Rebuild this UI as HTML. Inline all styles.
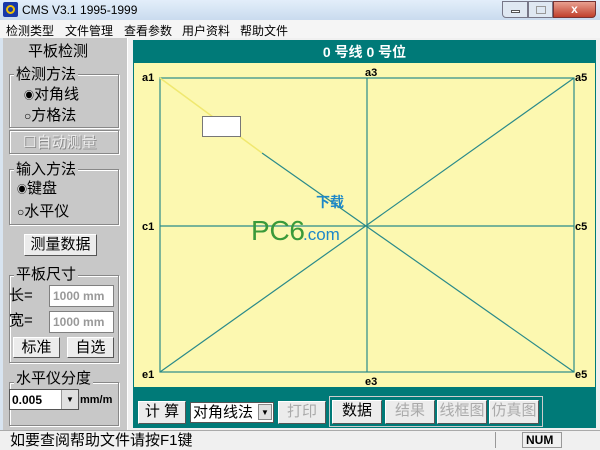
<!DOCTYPE html>
<html><head><meta charset="utf-8"><style>
*{margin:0;padding:0;box-sizing:border-box}
body{width:600px;height:450px;overflow:hidden;background:#d8e4f0;font-family:"Liberation Sans","Noto Sans CJK SC",sans-serif;position:relative;font-size:13px}
.a{position:absolute}
.title{left:0;top:0;width:600px;height:20px;background:linear-gradient(#e3eefa,#c9dbee);}
.menu{left:0;top:20px;width:600px;height:18px;background:#f5f5f5;font-size:12px}
.menu span{position:absolute;top:2px}
.left{left:3px;top:38px;width:125px;height:392px;background:#c8c8c8;border-right:1px solid #fff}
.grp{position:absolute;border:1px solid #888;box-shadow:1px 1px 0 #fff inset,1px 1px 0 #fff}
.lg{position:absolute;background:#c8c8c8;font-size:15px;padding:0 2px;line-height:15px}
.btn{position:absolute;background:#ececec;border:1px solid #fff;border-right-color:#555;border-bottom-color:#555;text-align:center;font-size:15px;line-height:20px}
.t14{position:absolute;font-size:15px;line-height:16px}
.inp{position:absolute;background:#fff;border:1px solid #808080;font-size:12px;color:#999;padding:3px 3px;font-weight:bold}
</style></head><body>
<div class="a title"></div>
<div class="a" style="left:3px;top:2px;width:15px;height:15px;background:#1838a8;border-radius:2px"><div style="margin:3px;width:9px;height:9px;border:2px solid #f0c000;border-radius:50%"></div></div>
<div class="a" style="left:22px;top:3px;font-size:12px">CMS V3.1 1995-1999</div>
<div class="a" style="left:502px;top:1px;width:26px;height:17px;border:1px solid #778;border-radius:0 0 0 4px;background:#dfe8f2"><div style="margin:8px 8px;width:9px;height:3px;background:#fff;border:1px solid #555"></div></div>
<div class="a" style="left:528px;top:1px;width:25px;height:17px;border:1px solid #778;background:#dfe8f2"><div style="margin:4px 7px;width:10px;height:8px;border:1px solid #999"></div></div>
<div class="a" style="left:553px;top:1px;width:43px;height:17px;border:1px solid #733;border-radius:0 0 4px 0;background:linear-gradient(#e8a090,#c0402c);color:#fff;text-align:center;font-weight:bold;font-size:12px;line-height:15px">x</div>
<div class="a menu"><span style="left:6px">检测类型</span><span style="left:65px">文件管理</span><span style="left:124px">查看参数</span><span style="left:182px">用户资料</span><span style="left:240px">帮助文件</span></div>
<div class="a left">
 <div class="t14" style="left:25px;top:6px">平板检测</div>
 <div class="grp" style="left:6px;top:36px;width:110px;height:54px"></div>
 <div class="lg" style="left:11px;top:29px">检测方法</div>
 <div class="t14" style="left:21px;top:49px"><span style="font-size:10px">◉</span>对角线</div>
 <div class="t14" style="left:21px;top:70px"><span style="font-size:12px">○</span>方格法</div>
 <div class="grp" style="left:6px;top:92px;width:110px;height:24px"></div>
 <div class="t14" style="left:20px;top:97px;color:#eee;text-shadow:1px 1px 0 #888">☐自动测量</div>
 <div class="grp" style="left:6px;top:131px;width:110px;height:56px"></div>
 <div class="lg" style="left:11px;top:124px">输入方法</div>
 <div class="t14" style="left:14px;top:143px"><span style="font-size:10px">◉</span>键盘</div>
 <div class="t14" style="left:14px;top:166px"><span style="font-size:12px">○</span>水平仪</div>
 <div class="btn" style="left:21px;top:196px;width:73px;height:22px">测量数据</div>
 <div class="grp" style="left:6px;top:237px;width:110px;height:88px"></div>
 <div class="lg" style="left:11px;top:229px">平板尺寸</div>
 <div class="t14" style="left:6px;top:250px">长=</div>
 <div class="inp" style="left:46px;top:247px;width:65px;height:22px">1000 mm</div>
 <div class="t14" style="left:6px;top:275px">宽=</div>
 <div class="inp" style="left:46px;top:273px;width:65px;height:22px">1000 mm</div>
 <div class="btn" style="left:10px;top:299px;width:47px;height:21px">标准</div>
 <div class="btn" style="left:64px;top:299px;width:47px;height:21px">自选</div>
 <div class="grp" style="left:6px;top:344px;width:110px;height:44px"></div>
 <div class="lg" style="left:11px;top:333px">水平仪分度</div>
 <div class="a" style="left:6px;top:351px;width:70px;height:21px;background:#fff;border:1px solid #555;font-size:12px;font-weight:bold;padding:3px 2px">0.005</div>
 <div class="a" style="left:58px;top:352px;width:17px;height:19px;background:#e0e0e0;border-left:1px solid #999;font-size:8px;text-align:center;line-height:19px">▼</div>
 <div class="a" style="left:77px;top:356px;font-size:11px;font-weight:bold">mm/m</div>
</div>
<div class="a" style="left:128px;top:38px;width:472px;height:392px;background:#f0f0f0"></div>
<div class="a" style="left:133px;top:40px;width:463px;height:388px;background:#007a78"></div>
<div class="a" style="left:133px;top:42px;width:463px;text-align:center;color:#fff;font-weight:bold;font-size:14px">0 号线 0 号位</div>
<div class="a" style="left:134px;top:63px;width:461px;height:324px;background:#fcf8b0"></div>
<svg class="a" style="left:0;top:0" width="600" height="450">
<g stroke="#2a8a8a" stroke-width="1.2" fill="none">
<rect x="160" y="78" width="414" height="294"/>
<line x1="367" y1="78" x2="367" y2="372"/><line x1="160" y1="226" x2="574" y2="226"/>
<line x1="262" y1="153" x2="574" y2="372"/><line x1="574" y1="78" x2="160" y2="372"/>
</g>
<line x1="160" y1="78" x2="262" y2="153" stroke="#f0e870" stroke-width="1.5"/>
<g font-family="Liberation Sans" font-size="11" font-weight="bold">
<text x="142" y="81">a1</text><text x="365" y="76">a3</text><text x="575" y="81">a5</text>
<text x="142" y="230">c1</text><text x="575" y="230">c5</text>
<text x="142" y="378">e1</text><text x="365" y="385">e3</text><text x="575" y="378">e5</text></g>
<text x="251" y="240" font-family="Liberation Sans" font-size="28" fill="#3a9a3a" textLength="54">PC6</text>
<text x="316" y="207" font-family="Noto Sans CJK SC" font-size="14" fill="#1e88c8" font-weight="bold">下载</text>
<text x="303" y="240" font-family="Liberation Sans" font-size="17" fill="#1e88c8">.com</text>
</svg>
<div class="a" style="left:202px;top:116px;width:39px;height:21px;background:#fff;border:1px solid #777"></div>
<div class="btn" style="left:138px;top:401px;width:48px;height:23px">计 算</div>
<div class="a" style="left:190px;top:402px;width:84px;height:21px;background:#fff;border:1px solid #555;font-size:15px;padding-left:2px;line-height:19px">对角线法</div>
<div class="a" style="left:258px;top:404px;width:14px;height:16px;background:#e0e0e0;border:1px solid #888;font-size:8px;text-align:center;line-height:15px">▼</div>
<div class="btn" style="left:278px;top:401px;width:48px;height:23px;color:#aaa">打印</div>
<div class="a" style="left:329px;top:396px;width:214px;height:31px;border:1px solid #ccc"></div>
<div class="btn" style="left:332px;top:400px;width:50px;height:24px">数据</div>
<div class="btn" style="left:385px;top:400px;width:50px;height:24px;color:#aaa">结果</div>
<div class="btn" style="left:437px;top:400px;width:50px;height:24px;color:#aaa">线框图</div>
<div class="btn" style="left:489px;top:400px;width:50px;height:24px;color:#aaa">仿真图</div>
<div class="a" style="left:0;top:430px;width:600px;height:20px;background:#f0f0f0;border-top:1px solid #aaa;font-size:15px;padding:0 10px;line-height:19px">如要查阅帮助文件请按F1键</div>
<div class="a" style="left:495px;top:432px;width:1px;height:16px;background:#999"></div>
<div class="a" style="left:522px;top:432px;width:40px;height:16px;border:1px solid #999;font-size:12px;font-weight:bold;padding-left:3px">NUM</div>
</body></html>
